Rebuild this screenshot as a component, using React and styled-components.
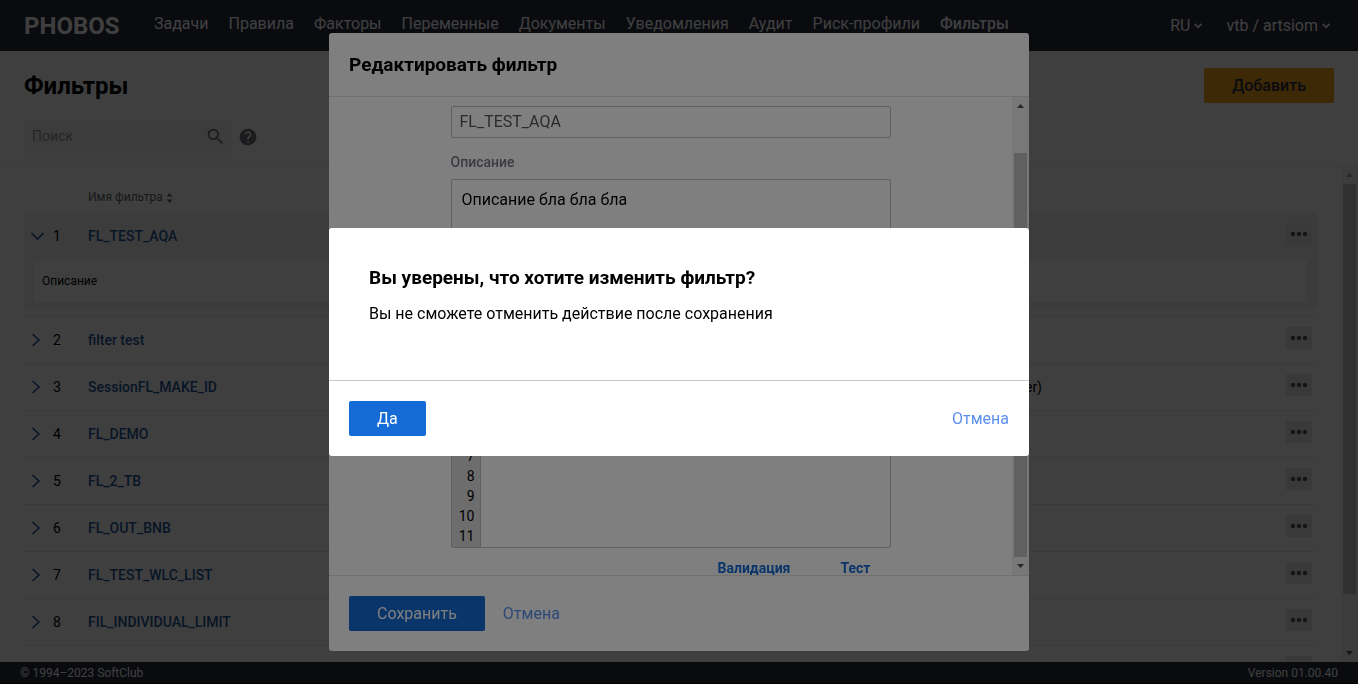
import React from "react";
import styled, { createGlobalStyle } from "styled-components";
import { MdSearch, MdHelp } from "react-icons/md";

const GlobalStyle = createGlobalStyle`
  *, *::before, *::after { box-sizing: border-box; }
  body {
    margin: 0;
    background: #fff;
    color: #000;
    font-family: Roboto, "Liberation Sans", sans-serif;
    font-size: 14px;
    line-height: 20px;
  }
  button, input, textarea { font: inherit; color: inherit; }
  button { cursor: pointer; }
  a { text-decoration: none; }
`;

const Page = styled.div`
  display: flex;
  flex-direction: column;
  height: 100vh;
  overflow: hidden;
`;

const TopBar = styled.header`
  display: flex;
  flex: none;
  align-items: center;
  height: 51px;
  padding: 0 28px 0 24px;
  background: #292c3c;
  color: #fff;
`;

const Logo = styled.a`
  width: 130px;
  color: #fff;
  font-size: 24px;
  font-weight: 700;
`;

const Nav = styled.nav`
  display: flex;
  flex: 1;
  gap: 20px;
  padding-bottom: 4px;
`;

const NavLink = styled.a`
  color: #fff;
  font-size: 16px;
  font-weight: ${(p) => (p.$active ? 500 : 400)};
`;

const UserMenu = styled.button`
  display: flex;
  align-items: center;
  gap: 4px;
  margin-left: 24px;
  padding: 0;
  border: 0;
  background: none;
  font-size: 16px;
`;

const PageHead = styled.section`
  display: flex;
  flex: none;
  justify-content: space-between;
  align-items: flex-start;
  height: 115px;
  padding: 17px 24px 12px;
  border-bottom: 1px solid #f0f0f0;
`;

const Title = styled.h1`
  margin: 0 0 16px;
  font-size: 24px;
  line-height: 36px;
  font-weight: 700;
`;

const SearchRow = styled.div`
  display: flex;
  align-items: center;
  gap: 6px;
  color: #6c6f78;
`;

const SearchBox = styled.label`
  display: flex;
  align-items: center;
  width: 208px;
  height: 33px;
  padding: 0 6px 0 8px;
  border-radius: 2px;
  background: #f3f3f3;
`;

const SearchInput = styled.input`
  flex: 1;
  min-width: 0;
  padding: 0 0 2px;
  border: 0;
  outline: 0;
  background: none;
  &::placeholder { color: #94969c; opacity: 1; }
`;

const Button = styled.button`
  height: 35px;
  padding: 0 28px;
  border: 0;
  border-radius: 2px;
  background: ${(p) => (p.$accent ? "#fba51c" : "#146bd6")};
  color: ${(p) => (p.$accent ? "#292c3c" : "#fff")};
  font-size: 16px;
  font-weight: ${(p) => (p.$accent ? 500 : 400)};
`;

const LinkButton = styled.button`
  padding: 0;
  border: 0;
  background: none;
  color: #5b8fee;
  font-size: 16px;
`;

const ListArea = styled.main`
  display: flex;
  flex: 1;
  min-height: 0;
`;

const ListScroll = styled.div`
  flex: 1;
  overflow: hidden;
  padding: 0 24px;
`;

const Table = styled.table`
  width: 100%;
  table-layout: fixed;
  border-collapse: collapse;
`;

const HeadCell = styled.th`
  width: ${(p) => p.$w || "auto"};
  height: 46px;
  padding: 16px 0 0;
  color: #666;
  font-size: 12px;
  font-weight: 400;
  text-align: left;
`;

const SortIcon = styled.svg`
  margin-left: 3px;
  vertical-align: -2px;
`;

const Row = styled.tr`
  height: 47px;
  border-top: 1px solid #e8e8e8;
  background: ${(p) => (p.$open ? "#f3f3f3" : "transparent")};
`;

const Cell = styled.td`
  padding: 0;
`;

const NoteCell = styled(Cell)`
  padding-right: 195px;
  text-align: right;
`;

const ActionCell = styled(Cell)`
  padding: 0 5px 4px 0;
  text-align: right;
`;

const Expander = styled.button`
  display: flex;
  align-items: center;
  gap: 9px;
  padding: 0 0 0 6px;
  border: 0;
  background: none;
`;

const Chevron = styled.svg`
  color: #1f5799;
  flex: none;
`;

const FilterLink = styled.a`
  color: #1f5799;
  font-weight: 500;
`;

const MoreButton = styled.button`
  display: inline-flex;
  align-items: center;
  justify-content: center;
  width: 26px;
  height: 22px;
  padding: 0;
  border: 0;
  background: #e6e6e6;
  color: #555;
  vertical-align: middle;
`;

const DetailCell = styled.td`
  padding: 1px 10px 7px;
  background: #f3f3f3;
`;

const Detail = styled.div`
  padding: 11px 8px;
  background: #fff;
  font-size: 12px;
`;

const SpacerCell = styled.td`
  height: 7px;
  padding: 0;
`;

const BottomBar = styled.footer`
  display: flex;
  flex: none;
  justify-content: space-between;
  align-items: center;
  height: 22px;
  padding: 0 20px;
  border-bottom: 1px solid #000;
  background: #292c3c;
  color: #fff;
  font-size: 12px;
`;

const Overlay = styled.div`
  position: fixed;
  inset: 0;
  display: flex;
  align-items: center;
  justify-content: center;
  background: rgba(0, 0, 0, 0.5);
`;

const Dialog = styled.section`
  display: flex;
  flex-direction: column;
  width: 700px;
  max-width: 100%;
  max-height: calc(100vh - 66px);
  border-radius: 3px;
  overflow: hidden;
  background: #fff;
`;

const DialogHead = styled.header`
  flex: none;
  padding: 22px 20px 21px;
  border-bottom: 1px solid #e0e0e0;
`;

const DialogTitle = styled.h2`
  margin: 0;
  font-size: 19px;
  font-weight: 700;
  line-height: 20px;
`;

const DialogBody = styled.div`
  display: flex;
  flex: 1;
  min-height: 0;
`;

const FormScroll = styled.div`
  flex: 1;
  overflow: hidden;
`;

const Form = styled.form`
  display: flex;
  flex-direction: column;
  width: 440px;
  margin: 0 auto;
  padding: 9px 0 24px;
`;

const NameInput = styled.input`
  height: 32px;
  padding: 0 8px 2px;
  border: 1px solid #bcbec8;
  border-radius: 2px;
  background: #fff;
  color: #555;
  font-size: 16px;
`;

const FieldLabel = styled.label`
  margin: 14px 0 7px;
  color: #74778a;
  font-weight: 500;
`;

const DescriptionInput = styled.textarea`
  height: 110px;
  padding: 10px;
  border: 1px solid #bcbec8;
  border-radius: 2px;
  background: #fff;
  resize: none;
  font-size: 16px;
`;

const Editor = styled.div`
  display: flex;
  margin-top: 36px;
  border: 1px solid #bcbec8;
  border-radius: 2px;
`;

const LineNumbers = styled.ol`
  width: 29px;
  margin: 0;
  padding: 0 5px 1px 0;
  border-right: 1px solid #bcbec8;
  background: #dadada;
  list-style: none;
  text-align: right;
`;

const CodeInput = styled.textarea`
  flex: 1;
  border: 0;
  outline: 0;
  background: none;
  resize: none;
`;

const EditorLinks = styled.div`
  display: flex;
  justify-content: flex-end;
  gap: 50px;
  margin-top: 10px;
  padding-right: 20px;
`;

const EditorLink = styled.a`
  color: #146bd6;
  font-weight: 700;
`;

const DialogFoot = styled.footer`
  display: flex;
  flex: none;
  align-items: center;
  justify-content: ${(p) => (p.$spread ? "space-between" : "flex-start")};
  gap: 18px;
  padding: 20px;
  border-top: 1px solid ${(p) => (p.$spread ? "#c8c8c8" : "#e0e0e0")};
`;

const Message = styled.div`
  padding: 40px 40px 54px;
  font-size: 16px;
`;

const MessageText = styled.p`
  margin: 14px 0 0;
  line-height: 24px;
`;

const Track = styled.div`
  display: flex;
  flex: none;
  flex-direction: column;
  align-items: center;
  width: 17px;
  background: #f1f1f1;
`;

const ArrowBox = styled.svg`
  flex: none;
  width: 17px;
  height: 17px;
  fill: ${(p) => (p.$dim ? "#a3a3a3" : "#505050")};
`;

const Gap = styled.div`
  flex: ${(p) => p.$share} 0 0;
`;

const Thumb = styled.div`
  flex: ${(p) => p.$share} 0 0;
  width: 13px;
  background: #c1c1c1;
`;

function ScrollBar({ before, thumb, after, atTop }) {
  return (
    <Track aria-hidden="true">
      <ArrowBox viewBox="0 0 17 17" $dim={atTop}>
        <path d="M5 11h7L8.500 7z" />
      </ArrowBox>
      <Gap $share={before} />
      <Thumb $share={thumb} />
      <Gap $share={after} />
      <ArrowBox viewBox="0 0 17 17">
        <path d="M5 6h7L8.500 10z" />
      </ArrowBox>
    </Track>
  );
}

const MenuArrow = () => (
  <svg width="8" height="6" viewBox="0 0 8 6" fill="none" stroke="currentColor" strokeWidth="1.800">
    <path d="M.600.900L4 4.300 7.400.900" />
  </svg>
);

const RowChevron = ({ open }) => (
  <Chevron width="14" height="14" viewBox="0 0 14 14" fill="none" stroke="currentColor" strokeWidth="1.600">
    <path d={open ? "M1.500 4l6 6 6-6" : "M2.500 1l6.500 6-6.500 6"} />
  </Chevron>
);

const Dots = () => (
  <svg width="18" height="6" viewBox="0 0 18 6" fill="currentColor">
    <circle cx="3" cy="3" r="2.200" />
    <circle cx="9" cy="3" r="2.200" />
    <circle cx="15" cy="3" r="2.200" />
  </svg>
);

const sections = [
  "Задачи",
  "Правила",
  "Факторы",
  "Переменные",
  "Документы",
  "Уведомления",
  "Аудит",
  "Риск-профили",
  "Фильтры",
];

const filters = [
  { name: "FL_TEST_AQA", open: true },
  { name: "filter test" },
  { name: "SessionFL_MAKE_ID", note: "er)" },
  { name: "FL_DEMO" },
  { name: "FL_2_TB" },
  { name: "FL_OUT_BNB" },
  { name: "FL_TEST_WLC_LIST" },
  { name: "FIL_INDIVIDUAL_LIMIT" },
  {},
];

const lines = Array.from({ length: 11 }, (_, i) => i + 1);

function FilterRow({ filter, number }) {
  return (
    <>
      <Row $open={filter.open}>
        <Cell>
          {filter.name && (
            <Expander type="button" aria-expanded={!!filter.open}>
              <RowChevron open={filter.open} />
              {number}
            </Expander>
          )}
        </Cell>
        <Cell>{filter.name && <FilterLink href="#filter">{filter.name}</FilterLink>}</Cell>
        <NoteCell>{filter.note}</NoteCell>
        <ActionCell>
          <MoreButton type="button" aria-label="Действия">
            <Dots />
          </MoreButton>
        </ActionCell>
      </Row>
      {filter.open && (
        <>
          <tr>
            <DetailCell colSpan={4}>
              <Detail>Описание</Detail>
            </DetailCell>
          </tr>
          <tr>
            <SpacerCell colSpan={4} />
          </tr>
        </>
      )}
    </>
  );
}

export default function App() {
  return (
    <>
      <GlobalStyle />
      <Page>
        <TopBar>
          <Logo href="#home">PHOBOS</Logo>
          <Nav>
            {sections.map((s) => (
              <NavLink key={s} href="#section" $active={s === "Фильтры"}>
                {s}
              </NavLink>
            ))}
          </Nav>
          <UserMenu type="button">
            RU
            <MenuArrow />
          </UserMenu>
          <UserMenu type="button">
            vtb / artsiom
            <MenuArrow />
          </UserMenu>
        </TopBar>
        <PageHead>
          <div>
            <Title>Фильтры</Title>
            <SearchRow>
              <SearchBox>
                <SearchInput type="search" placeholder="Поиск" aria-label="Поиск" />
                <MdSearch size={21} />
              </SearchBox>
              <MdHelp size={20} />
            </SearchRow>
          </div>
          <Button type="button" $accent>
            Добавить
          </Button>
        </PageHead>
        <ListArea>
          <ListScroll>
            <Table>
              <thead>
                <tr>
                  <HeadCell $w="64px" />
                  <HeadCell $w="412px">
                    Имя фильтра
                    <SortIcon width="7" height="10" viewBox="0 0 7 10" fill="currentColor">
                      <path d="M3.500 0l3 3.500h-6zM3.500 10l3-3.500h-6z" />
                    </SortIcon>
                  </HeadCell>
                  <HeadCell />
                  <HeadCell $w="80px" />
                </tr>
              </thead>
              <tbody>
                {filters.map((f, i) => (
                  <FilterRow key={i} filter={f} number={i + 1} />
                ))}
              </tbody>
            </Table>
          </ListScroll>
          <ScrollBar before={1} thumb={410} after={51} atTop />
        </ListArea>
        <BottomBar>
          <span>© 1994–2023 SoftClub</span>
          <span>Version 01.00.40</span>
        </BottomBar>
      </Page>

      <Overlay>
        <Dialog role="dialog" aria-labelledby="edit-title">
          <DialogHead>
            <DialogTitle id="edit-title">Редактировать фильтр</DialogTitle>
          </DialogHead>
          <DialogBody>
            <FormScroll>
              <Form>
                <NameInput type="text" aria-label="Имя фильтра" defaultValue="FL_TEST_AQA" />
                <FieldLabel htmlFor="description">Описание</FieldLabel>
                <DescriptionInput id="description" defaultValue="Описание бла бла бла" />
                <Editor>
                  <LineNumbers>
                    {lines.map((n) => (
                      <li key={n}>{n}</li>
                    ))}
                  </LineNumbers>
                  <CodeInput aria-label="Код фильтра" />
                </Editor>
                <EditorLinks>
                  <EditorLink href="#validate">Валидация</EditorLink>
                  <EditorLink href="#test">Тест</EditorLink>
                </EditorLinks>
              </Form>
            </FormScroll>
            <ScrollBar before={39} thumb={404} after={1} />
          </DialogBody>
          <DialogFoot>
            <Button type="button">Сохранить</Button>
            <LinkButton type="button">Отмена</LinkButton>
          </DialogFoot>
        </Dialog>
      </Overlay>

      <Overlay>
        <Dialog role="alertdialog" aria-labelledby="confirm-title">
          <Message>
            <DialogTitle id="confirm-title">Вы уверены, что хотите изменить фильтр?</DialogTitle>
            <MessageText>Вы не сможете отменить действие после сохранения</MessageText>
          </Message>
          <DialogFoot $spread>
            <Button type="button">Да</Button>
            <LinkButton type="button">Отмена</LinkButton>
          </DialogFoot>
        </Dialog>
      </Overlay>
    </>
  );
}
